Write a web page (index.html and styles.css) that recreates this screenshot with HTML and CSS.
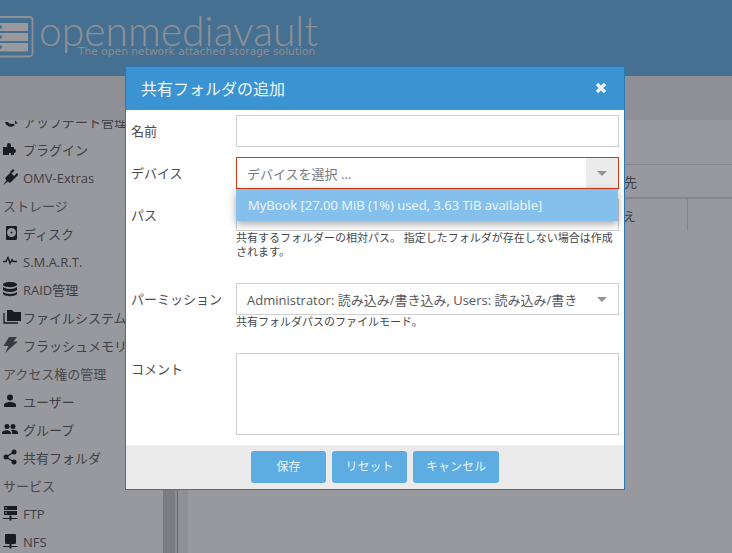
FILE: index.html
```html
<!DOCTYPE html>
<html lang="ja">
<head>
<meta charset="utf-8">
<title>openmediavault</title>
<link rel="stylesheet" href="styles.css">
</head>
<body>
<div class="page">
  <header class="top">
    <svg class="logo" width="34" height="42" viewBox="0 0 34 42">
      <path d="M0 1H29q3.500 0 3.500 3.500V37q0 3.500-3.500 3.500H0" fill="none" stroke="#8f9095" stroke-width="1.800"/>
      <rect x="0" y="7" width="28" height="8" fill="#9a9a9e"/>
      <rect x="0" y="17" width="28" height="8" fill="#9a9a9e"/>
      <rect x="0" y="27" width="28" height="8.500" fill="#9a9a9e"/>
      <circle cx="0.500" cy="11" r="1.700" fill="#457091"/>
      <circle cx="0.500" cy="21" r="1.700" fill="#457091"/>
      <circle cx="0.500" cy="31" r="1.700" fill="#457091"/>
    </svg>
    <div class="brand">
      <div class="brand-name">openmediavault</div>
      <div class="brand-sub">The open network attached storage solution</div>
    </div>
  </header>
  <div class="toolbar"></div>
  <div class="body">
    <nav class="side">
      <div class="row"><svg class="ic" viewBox="0 0 16 16"><path d="M3 9a6 6 0 0 0 10 3l-2-1.500a3.500 3.500 0 0 1-5-1.500zM13 7.500l3 3h-3z"/></svg><span>アップデート管理</span></div>
      <div class="row"><svg class="ic" viewBox="0 0 16 16"><path d="M1 6h4V4a2 2 0 0 1 4 0v2h3v2a2 2 0 0 1 0 4v2H9v-2H7v2H1z"/></svg><span>プラグイン</span></div>
      <div class="row"><svg class="ic" viewBox="0 0 16 16"><path d="M1 16l3.500-4.500-1.500-2.500 5.500-5.500 5 5-5.500 5.500-2-1.500zM8 3l3-3 1.500 1.500-3 3zM12 7l3-3 1.500 1.500-3 3z"/></svg><span class="latin">OMV-Extras</span></div>
      <div class="row head">ストレージ</div>
      <div class="row"><svg class="ic" viewBox="0 0 16 16"><path fill-rule="evenodd" d="M5 1h9a1 1 0 0 1 1 1v12a1 1 0 0 1-1 1H5a1 1 0 0 1-1-1V2a1 1 0 0 1 1-1zm4.500 2a4.500 4.500 0 1 0 0 9 4.500 4.500 0 0 0 0-9zm0 3.500a1 1 0 1 1 0 2 1 1 0 0 1 0-2z"/></svg><span>ディスク</span></div>
      <div class="row"><svg class="ic" viewBox="0 0 16 16"><path d="M1 8.500h3l2-4 2 6 2-4 1 2h4" fill="none" stroke="#1c1c20" stroke-width="1.400"/></svg><span class="latin">S.M.A.R.T.</span></div>
      <div class="row"><svg class="ic" viewBox="0 0 16 16"><path d="M1 3.500c0-3.500 14-3.500 14 0s-14 3.500-14 0zM1 6c3 2.500 11 2.500 14 0v3c-3 2.500-11 2.500-14 0zM1 11c3 2.500 11 2.500 14 0v1.500c0 3.500-14 3.500-14 0z"/></svg><span>RAID管理</span></div>
      <div class="row"><svg class="ic ic-wide" viewBox="0 0 19 16"><path d="M5 1h5l2 2h7v9H5z"/><path d="M2 4v10h14" fill="none" stroke="#1c1c20" stroke-width="1.300"/></svg><span>ファイルシステム</span></div>
      <div class="row"><svg class="ic" viewBox="0 0 16 16"><path d="M7 0h8l-3.500 4.500H16L3 16l3.500-7H1.500z" fill="#3a3a3f"/></svg><span>フラッシュメモリ</span></div>
      <div class="row head">アクセス権の管理</div>
      <div class="row"><svg class="ic" viewBox="0 0 16 16"><circle cx="8" cy="4.500" r="3"/><path d="M2 14v-2c0-4 12-4 12 0v2z"/></svg><span>ユーザー</span></div>
      <div class="row"><svg class="ic" viewBox="0 0 16 16"><circle cx="5" cy="5.500" r="2.500"/><circle cx="11" cy="5.500" r="2.500"/><path d="M0 13v-1c0-3 8-4 9 0v1zM10 13v-2c0-1-.5-1.500-1-2 3-1 7 0 7 3v1z"/></svg><span>グループ</span></div>
      <div class="row"><svg class="ic" viewBox="0 0 16 16"><circle cx="12" cy="3" r="2.500"/><circle cx="4" cy="8" r="2.500"/><circle cx="12" cy="13" r="2.500"/><path d="M12 3L4 8l8 5" fill="none" stroke="#1c1c20" stroke-width="1.300"/></svg><span>共有フォルダ</span></div>
      <div class="row head">サービス</div>
      <div class="row"><svg class="ic" viewBox="0 0 16 16"><path fill-rule="evenodd" d="M2 1h13v4H2zM2 6h13v4H2zM3 2.500v1h2v-1zM3 7.500v1h2v-1zM7.500 10.500h2V13h6v1h-6v1.500h-2V14H1v-1h6.500z"/></svg><span class="latin">FTP</span></div>
      <div class="row"><svg class="ic" viewBox="0 0 16 16"><path d="M4 1h9a1 1 0 0 1 1 1v8a1 1 0 0 1-1 1H4a1 1 0 0 1-1-1V2a1 1 0 0 1 1-1zM7.500 11h2v2h6v1h-6v1.500h-2V14H1v-1h6.500z"/></svg><span class="latin">NFS</span></div>
    </nav>
    <div class="splitter"><div class="grip"></div></div>
    <main class="content">
      <div class="gutter"></div>
      <div class="panel">
        <div class="band"></div>
        <div class="grid-head"><span>先</span></div>
        <div class="grid-row"><span class="cell-text">え</span><div class="cell-last"></div></div>
      </div>
    </main>
  </div>
</div>

<section class="dialog">
  <div class="dlg-title">
    <span>共有フォルダの追加</span>
    <svg class="close" width="12" height="12" viewBox="0 0 12 12"><path d="M2 2l8 8M10 2l-8 8" stroke="#edf3f8" stroke-width="3.200" fill="none"/></svg>
  </div>
  <div class="form">
    <div class="field f-name">
      <label>名前</label>
      <div class="box"></div>
    </div>
    <div class="field f-device">
      <label>デバイス</label>
      <div class="box invalid"><span class="ph">デバイスを選択 ...</span><span class="trigger"><i class="caret"></i></span></div>
    </div>
    <div class="field f-path">
      <label>パス</label>
      <div class="stack">
        <div class="box"></div>
        <p class="help">共有するフォルダーの相対パス。 指定したフォルダが存在しない場合は作成されます。</p>
      </div>
    </div>
    <div class="field f-perm">
      <label>パーミッション</label>
      <div class="stack">
        <div class="box"><span class="val">Administrator: 読み込み/書き込み, Users: 読み込み/書き</span><span class="arrow"><i class="caret"></i></span></div>
        <p class="help">共有フォルダパスのファイルモード。</p>
      </div>
    </div>
    <div class="field f-comment">
      <label>コメント</label>
      <div class="box area"></div>
    </div>
    <div class="droplist">MyBook [27.00 MiB (1%) used, 3.63 TiB available]</div>
  </div>
  <div class="dlg-foot">
    <button class="btn b-save">保存</button>
    <button class="btn b-reset">リセット</button>
    <button class="btn b-cancel">キャンセル</button>
  </div>
</section>
</body>
</html>
```
FILE: styles.css
```css
* { box-sizing: border-box; }
html, body { margin: 0; padding: 0; height: 553px; overflow: hidden; }
body { font-family: "Open Sans", "Noto Sans CJK JP", sans-serif; font-size: 13px; color: #45454a; background: #98999e; }
.page { width: 732px; height: 553px; display: flex; flex-direction: column; overflow: hidden; }

.top { height: 76px; flex: none; background: #457091; display: flex; padding: 16px 0 0 0; overflow: hidden; }
.logo { flex: none; }
.brand { margin: -2px 0 0 5px; }
.brand-name { font-family: "Lato", sans-serif; font-weight: 300; font-size: 40.800px; line-height: 34px; color: #8f9095; }
.brand-sub { font-family: "DejaVu Sans", sans-serif; font-size: 10.700px; line-height: 12px; color: #8a8d94; margin: -2px 0 0 39px; white-space: nowrap; }

.toolbar { height: 44px; flex: none; background: #8f9095; position: relative; z-index: 1; }
.body { flex: 1; display: flex; min-height: 0; }
.side { width: 163px; flex: none; margin-top: -13px; }
.row { height: 28px; display: flex; align-items: center; padding-left: 2px; color: #3e3e43; font-size: 13px; white-space: nowrap; }
.row span { margin-left: 5px; }
.row .latin { padding-top: 2px; }
.row.head { padding-left: 3px; color: #48484d; }
.ic { width: 16px; height: 16px; flex: none; fill: #1c1c20; }
.ic-wide { width: 19px; margin-right: -3px; }

.splitter { width: 14px; flex: none; background: #8b8c91; }
.grip { width: 12px; height: 100%; background: #7b7c81; }
.content { flex: 1; display: flex; min-width: 0; border-left: 1px solid #4c7299; }
.gutter { width: 10px; flex: none; background: #8f9095; }
.panel { flex: 1; min-width: 0; background: #98999e; }
.band { height: 44px; }
.grid-head { height: 35px; border-top: 1px solid #828388; border-bottom: 2px solid #85868b; display: flex; align-items: center; justify-content: flex-end; padding-right: 95px; color: #3e3e43; }
.grid-row { height: 32px; display: flex; align-items: center; justify-content: flex-end; color: #3e3e43; }
.grid-row .cell-text { margin-right: 51px; }
.cell-last { width: 45px; height: 100%; border-left: 1px solid #85868b; }

.dialog { position: absolute; z-index: 2; left: 125px; top: 66px; width: 500px; height: 424px; background: #fff; border: 1px solid #2a79b5; display: flex; flex-direction: column; }
.dlg-title { height: 43px; flex: none; background: #3b94d1; color: #f0f5fa; font-size: 16px; display: flex; align-items: center; justify-content: space-between; padding: 0 17px 2px 15px; }
.close { margin-top: 1px; }
.form { flex: 1; position: relative; padding: 5px 5px 0 5px; display: flex; flex-direction: column; min-height: 0; }
.field { display: flex; }
.field label { width: 105px; flex: none; padding-top: 7px; line-height: 18px; color: #4b4b50; font-size: 13px; }
.stack { flex: 1; min-width: 0; }
.box { flex: 1; height: 32px; border: 1px solid #cfcfcf; background: #fff; display: flex; align-items: center; overflow: hidden; }
.f-device, .f-path { margin-top: 10px; }
.f-perm, .f-comment { margin-top: 24px; }
.invalid { border-color: #cf3a12; }
.ph { padding-left: 10px; color: #77777b; flex: 1; }
.trigger { width: 32px; height: 100%; background: #ebebeb; display: flex; align-items: center; justify-content: center; }
.caret { display: block; width: 0; height: 0; border-left: 5px solid transparent; border-right: 5px solid transparent; border-top: 5px solid #949494; }
.val { padding-left: 10px; flex: 1; min-width: 0; white-space: nowrap; color: #57575c; }
.arrow { width: 32px; flex: none; height: 100%; display: flex; align-items: center; justify-content: center; }
.help { margin: 0; font-size: 11px; line-height: 14px; color: #45454a; }
.area { height: 82px; }
.droplist { position: absolute; left: 110px; top: 79px; width: 382px; height: 32px; padding-left: 12px; background: #85c0ec; color: #f2f7fb; line-height: 33px; box-shadow: 0 3px 8px rgba(0,0,0,.35); }
.dlg-foot { height: 44px; flex: none; background: #ebebeb; display: flex; justify-content: center; align-items: center; gap: 6px; }
.btn { height: 32px; border: 0; border-radius: 3px; background: #5dade2; color: #e6f2fa; font: inherit; font-size: 12px; padding: 0 0 2px; }
.b-save, .b-reset { width: 75px; }
.b-cancel { width: 86px; }
```
